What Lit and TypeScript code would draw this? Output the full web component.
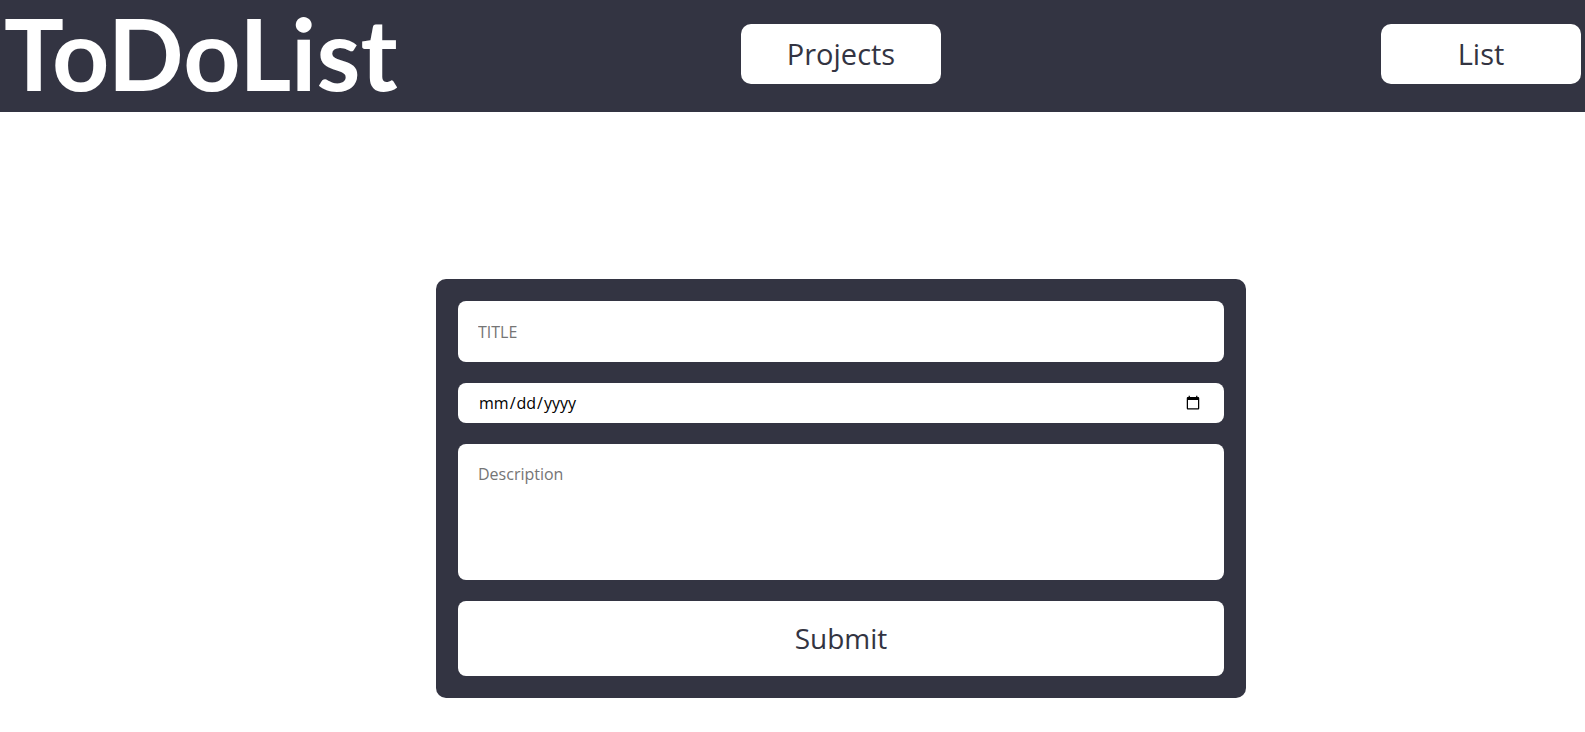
import { LitElement, html, css } from "lit";
import { customElement } from "lit/decorators.js";

@customElement("todo-header")
export class TodoHeader extends LitElement {
  static styles = css`
    :host {
      display: block;
      background: #333442;
    }
    .bar {
      display: grid;
      grid-template-columns: 737fr 200px 640fr;
      align-items: center;
      padding: 0 4px;
    }
    .brand {
      margin: 0;
      padding-bottom: 8px;
      color: #fff;
      font-family: "Trebuchet MS", Lato, "Open Sans", sans-serif;
      font-size: 100px;
      font-weight: 700;
      line-height: 104px;
      white-space: nowrap;
    }
    .tab {
      width: 200px;
      height: 60px;
      margin: 0 0 4px;
      padding: 0;
      border: 0;
      border-radius: 10px;
      background: #fff;
      color: #333442;
      font: inherit;
      font-size: 29px;
      line-height: 40px;
      cursor: pointer;
    }
    .last {
      justify-self: end;
    }
  `;

  render() {
    return html`
      <header class="bar">
        <h1 class="brand">ToDoList</h1>
        <button class="tab" type="button">Projects</button>
        <button class="tab last" type="button">List</button>
      </header>
    `;
  }
}

@customElement("todo-form")
export class TodoForm extends LitElement {
  static styles = css`
    :host {
      display: block;
      width: 100%;
      max-width: 810px;
    }
    .card {
      display: flex;
      flex-direction: column;
      gap: 21px;
      padding: 22px;
      border-radius: 10px;
      background: #333442;
    }
    .field {
      display: block;
      width: 100%;
      box-sizing: border-box;
      margin: 0;
      padding: 20px;
      border: 0;
      border-radius: 8px;
      background: #fff;
      color: #000;
      font: inherit;
      font-size: 16px;
      line-height: 21px;
    }
    .field::placeholder {
      color: #757575;
    }
    .title {
      height: 61px;
    }
    .date {
      height: 40px;
      padding: 0 21px 0 20px;
    }
    .description {
      height: 136px;
      resize: none;
    }
    .submit {
      height: 75px;
      padding: 0 0 2px;
      border: 0;
      border-radius: 8px;
      background: #fff;
      color: #333442;
      font: inherit;
      font-size: 28px;
      line-height: 40px;
      cursor: pointer;
    }
  `;

  private onSubmit(event: Event) {
    event.preventDefault();
  }

  render() {
    return html`
      <form class="card" @submit=${this.onSubmit}>
        <input class="field title" type="text" placeholder="TITLE" aria-label="Title" />
        <input class="field date" type="date" aria-label="Due date" />
        <textarea class="field description" placeholder="Description" aria-label="Description"></textarea>
        <button class="submit" type="submit">Submit</button>
      </form>
    `;
  }
}

@customElement("app-root")
export class AppRoot extends LitElement {
  static styles = css`
    :host {
      display: block;
      min-height: 100vh;
      background: #fff;
      font-family: "Trebuchet MS", "Open Sans", "Noto Sans", sans-serif;
    }
    .content {
      display: flex;
      justify-content: center;
      padding: 167px 0 32px 97px;
    }
  `;

  render() {
    return html`
      <todo-header></todo-header>
      <main class="content">
        <todo-form></todo-form>
      </main>
    `;
  }
}
